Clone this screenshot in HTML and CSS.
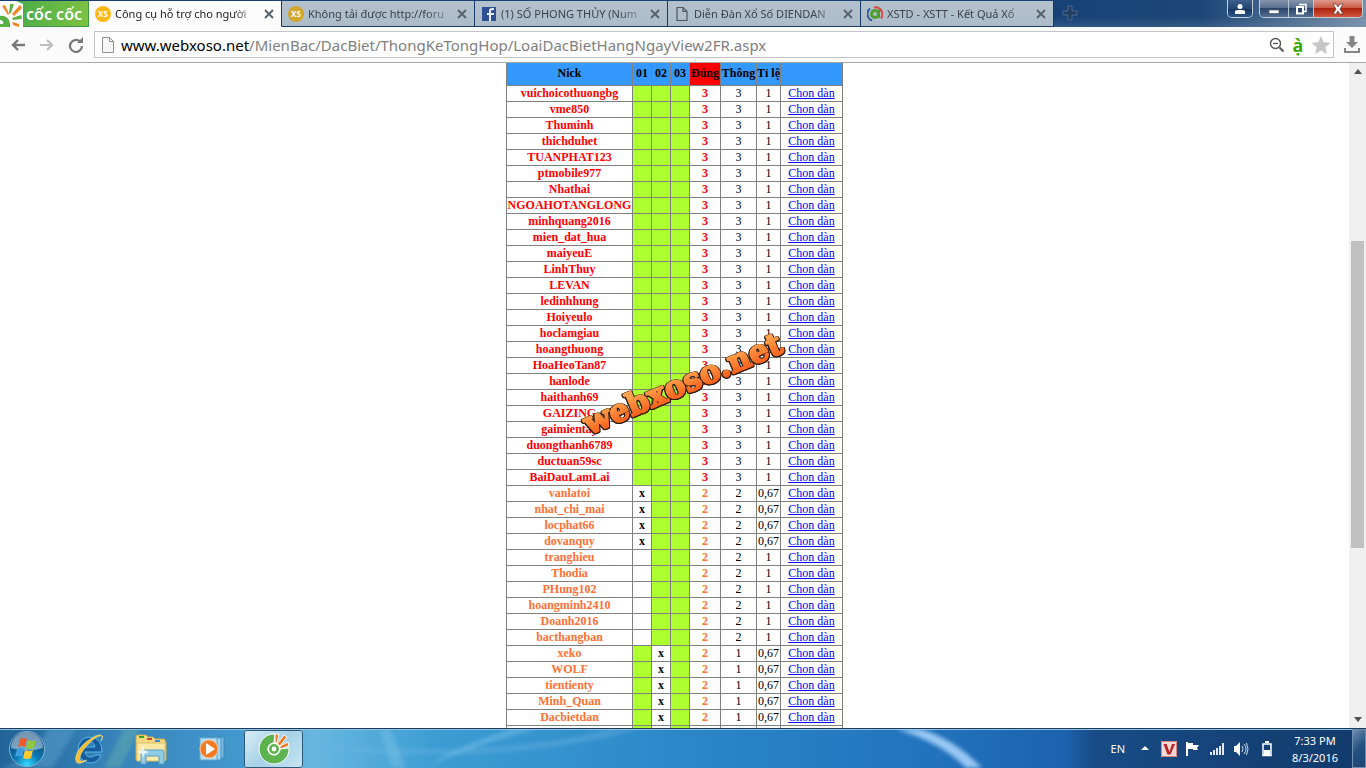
FILE: index.html
```html
<!DOCTYPE html>
<html lang="vi">
<head>
<meta charset="utf-8">
<title>Công cụ hỗ trợ cho người</title>
<link rel="stylesheet" href="styles.css">
</head>
<body>
<header class="titlebar">
  <button class="brand" aria-label="Cốc Cốc">
    <svg width="24" height="26" viewBox="0 0 24 26"><path d="M0 0h16l7 3v23H0z" fill="#fff"/><path d="M2 5l3-1 4 9-1 1z" fill="#f58220"/><path d="M10 3l4 0-3 9-2 1z" fill="#62b346"/><path d="M20 4l2 3-8 8-2-2z" fill="#f58220"/><path d="M12 17l9-3 1 4-9 1z" fill="#62b346"/><path d="M12 21l7 2v3l-6-2z" fill="#f58220"/><path d="M0 15c5-1 9 2 10 7v4H0v-3h3c1-2-1-4-3-4z" fill="#55b046"/></svg>
    <span>cốc cốc</span>
  </button>
  <nav class="tabs">
    <div class="tab active"><svg class="fav" viewBox="0 0 16 16"><circle cx="8" cy="8" r="8" fill="#fdb913"/><text class="xs" x="8" y="11" text-anchor="middle">XS</text></svg><a href="#">Công cụ hỗ trợ cho người</a><button class="close" aria-label="Đóng"><svg viewBox="0 0 10 10"><path d="M1 1l8 8M9 1L1 9"/></svg></button></div>
    <div class="tab"><svg class="fav" viewBox="0 0 16 16"><circle cx="8" cy="8" r="8" fill="#d3a62c"/><text class="xs" x="8" y="11" text-anchor="middle">XS</text></svg><a href="#">Không tải được http://foru</a><button class="close" aria-label="Đóng"><svg viewBox="0 0 10 10"><path d="M1 1l8 8M9 1L1 9"/></svg></button></div>
    <div class="tab"><svg class="fav" viewBox="0 0 16 16"><path d="M1 1h14v14H1z" fill="#2f4f94"/><path d="M8 15V9H6V7h2V5c0-2 1-3 3-3h2v2h-1c-1 0-2 0-2 1v2h3v2h-3v6z" fill="#e6edf5"/></svg><a href="#">(1) SỐ PHONG THỦY (Num</a><button class="close" aria-label="Đóng"><svg viewBox="0 0 10 10"><path d="M1 1l8 8M9 1L1 9"/></svg></button></div>
    <div class="tab"><svg class="fav" viewBox="0 0 16 16"><path d="M3 1.500h6l4 4v9H3zM9 1.500v4h4" fill="none" stroke="#4f565c" stroke-width="1.200"/></svg><a href="#">Diễn Đàn Xổ Số DIENDAN</a><button class="close" aria-label="Đóng"><svg viewBox="0 0 10 10"><path d="M1 1l8 8M9 1L1 9"/></svg></button></div>
    <div class="tab"><svg class="fav" viewBox="0 0 16 16"><circle cx="8" cy="8" r="3.500" fill="none" stroke="#4d9e2e" stroke-width="3"/><path d="M12 4v8" stroke="#4d9e2e" stroke-width="2"/><path d="M3 2.500a7 7 0 0 0 2 12" fill="none" stroke="#3159a0" stroke-width="2"/><path d="M7 1.500a7 7 0 0 1 7 11" fill="none" stroke="#d7483f" stroke-width="2"/></svg><a href="#">XSTD - XSTT - Kết Quả Xổ</a><button class="close" aria-label="Đóng"><svg viewBox="0 0 10 10"><path d="M1 1l8 8M9 1L1 9"/></svg></button></div>
  </nav>
  <button class="newtab" aria-label="Tab mới"><svg width="16" height="16" viewBox="0 0 16 16"><path d="M6 1h4v5h5v4h-5v5H6v-5H1V6h5z" fill="#203d60" stroke="#4a6b92"/></svg></button>
  <div class="winctl user"><button aria-label="Người dùng"><svg width="12" height="12" viewBox="0 0 12 12"><circle cx="6" cy="3.500" r="2.500" fill="#fff"/><path d="M1 11V9q0-2 3-2h4q3 0 3 2v2z" fill="#fff"/></svg></button></div>
  <div class="winctl">
    <button class="min" aria-label="Thu nhỏ"><svg width="12" height="12" viewBox="0 0 12 12"><path d="M1 7h10v3.500H1z" fill="#fff" stroke="#4d5a6c" stroke-width=".7"/></svg></button>
    <button class="restore" aria-label="Khôi phục"><svg width="12" height="12" viewBox="0 0 12 12"><path d="M4 1.500h7v7H9" fill="none" stroke="#fff" stroke-width="1.500"/><path d="M2 4h6v6.500H2z" fill="none" stroke="#fff" stroke-width="2"/><path d="M4 6.500h2v2H4z" fill="#2c3c56"/></svg></button>
    <button class="quit" aria-label="Đóng cửa sổ"><svg width="14" height="12" viewBox="0 0 14 12"><path d="M2 1h3l2 3 2-3h3L9 6l3 5H9L7 8l-2 3H2l3-5z" fill="#fff" stroke="#5b3036" stroke-width=".7"/></svg></button>
  </div>
</header>
<div class="toolbar">
  <button class="nav" aria-label="Quay lại"><svg viewBox="0 0 16 16"><path d="M15 8H3M8 3L3 8l5 5" fill="none" stroke="#77787a" stroke-width="2.400"/></svg></button>
  <button class="nav" aria-label="Tiến"><svg viewBox="0 0 16 16"><path d="M1 8h12M8 3l5 5-5 5" fill="none" stroke="#bdbdbd" stroke-width="2.200"/></svg></button>
  <button class="nav reload" aria-label="Tải lại"><svg viewBox="0 0 16 16"><path d="M12 4.500A6 6 0 1 0 14 9" fill="none" stroke="#77787a" stroke-width="2.200"/><path d="M9 6h6V0z" fill="#77787a"/></svg></button>
  <div class="address">
    <svg width="12" height="16" viewBox="0 0 12 16"><path d="M.5.5h7l4 4v11H.5zM7.500.5v4h4" fill="#f7f7f7" stroke="#8f8f8f"/></svg>
    <div class="url" role="textbox" aria-label="Địa chỉ" contenteditable="true" spellcheck="false"><b>www.webxoso.net</b>/MienBac/DacBiet/ThongKeTongHop/LoaiDacBietHangNgayView2FR.aspx</div>
    <button aria-label="Thu phóng"><svg width="16" height="16" viewBox="0 0 16 16"><circle cx="6.500" cy="6.500" r="5" fill="none" stroke="#555" stroke-width="1.400"/><path d="M4 6.500h5" stroke="#555" stroke-width="1.300"/><path d="M10.500 10.500l4 4" stroke="#555" stroke-width="2"/></svg></button>
    <button class="accent" aria-label="Thêm dấu">ạ̀</button>
    <button aria-label="Đánh dấu trang"><svg width="20" height="20" viewBox="0 0 20 20"><path d="M10 1l2.700 6.200 6.800.6-5.100 4.500 1.500 6.700L10 15.500 4.100 19l1.500-6.700L.5 7.800l6.800-.6z" fill="#c6c6c6"/></svg></button>
  </div>
  <button class="download" aria-label="Tải xuống"><svg width="16" height="17" viewBox="0 0 16 17"><path d="M5.500 0h5v6H14l-6 6-6-6h3.500z" fill="#858585"/><path d="M1 12v4h14v-4" fill="none" stroke="#858585" stroke-width="2"/></svg></button>
</div>
<div class="view">
  <main class="page">
    <table>
      <colgroup><col class="c-nick"><col class="c-day"><col class="c-day"><col class="c-day"><col class="c-hit"><col class="c-run"><col class="c-rate"><col class="c-link"></colgroup>
      <thead><tr><th>Nick</th><th>01</th><th>02</th><th>03</th><th class="hit">Đúng</th><th>Thông</th><th>Tỉ lệ</th><th></th></tr></thead>
      <tbody class="top">
        <tr><td>vuichoicothuongbg<td><td><td><td>3<td>3<td>1<td><a href="#">Chọn dàn</a>
        <tr><td>vme850<td><td><td><td>3<td>3<td>1<td><a href="#">Chọn dàn</a>
        <tr><td>Thuminh<td><td><td><td>3<td>3<td>1<td><a href="#">Chọn dàn</a>
        <tr><td>thichduhet<td><td><td><td>3<td>3<td>1<td><a href="#">Chọn dàn</a>
        <tr><td>TUANPHAT123<td><td><td><td>3<td>3<td>1<td><a href="#">Chọn dàn</a>
        <tr><td>ptmobile977<td><td><td><td>3<td>3<td>1<td><a href="#">Chọn dàn</a>
        <tr><td>Nhathai<td><td><td><td>3<td>3<td>1<td><a href="#">Chọn dàn</a>
        <tr><td>NGOAHOTANGLONG<td><td><td><td>3<td>3<td>1<td><a href="#">Chọn dàn</a>
        <tr><td>minhquang2016<td><td><td><td>3<td>3<td>1<td><a href="#">Chọn dàn</a>
        <tr><td>mien_dat_hua<td><td><td><td>3<td>3<td>1<td><a href="#">Chọn dàn</a>
        <tr><td>maiyeuE<td><td><td><td>3<td>3<td>1<td><a href="#">Chọn dàn</a>
        <tr><td>LinhThuy<td><td><td><td>3<td>3<td>1<td><a href="#">Chọn dàn</a>
        <tr><td>LEVAN<td><td><td><td>3<td>3<td>1<td><a href="#">Chọn dàn</a>
        <tr><td>ledinhhung<td><td><td><td>3<td>3<td>1<td><a href="#">Chọn dàn</a>
        <tr><td>Hoiyeulo<td><td><td><td>3<td>3<td>1<td><a href="#">Chọn dàn</a>
        <tr><td>hoclamgiau<td><td><td><td>3<td>3<td>1<td><a href="#">Chọn dàn</a>
        <tr><td>hoangthuong<td><td><td><td>3<td>3<td>1<td><a href="#">Chọn dàn</a>
        <tr><td>HoaHeoTan87<td><td><td><td>3<td>3<td>1<td><a href="#">Chọn dàn</a>
        <tr><td>hanlode<td><td><td><td>3<td>3<td>1<td><a href="#">Chọn dàn</a>
        <tr><td>haithanh69<td><td><td><td>3<td>3<td>1<td><a href="#">Chọn dàn</a>
        <tr><td>GAIZING<td><td><td><td>3<td>3<td>1<td><a href="#">Chọn dàn</a>
        <tr><td>gaimientay<td><td><td><td>3<td>3<td>1<td><a href="#">Chọn dàn</a>
        <tr><td>duongthanh6789<td><td><td><td>3<td>3<td>1<td><a href="#">Chọn dàn</a>
        <tr><td>ductuan59sc<td><td><td><td>3<td>3<td>1<td><a href="#">Chọn dàn</a>
        <tr><td>BaiDauLamLai<td><td><td><td>3<td>3<td>1<td><a href="#">Chọn dàn</a>
      </tbody>
      <tbody class="miss-first">
        <tr><td>vanlatoi<td>x<td><td><td>2<td>2<td>0,67<td><a href="#">Chọn dàn</a>
        <tr><td>nhat_chi_mai<td>x<td><td><td>2<td>2<td>0,67<td><a href="#">Chọn dàn</a>
        <tr><td>locphat66<td>x<td><td><td>2<td>2<td>0,67<td><a href="#">Chọn dàn</a>
        <tr><td>dovanquy<td>x<td><td><td>2<td>2<td>0,67<td><a href="#">Chọn dàn</a>
        <tr><td>tranghieu<td><td><td><td>2<td>2<td>1<td><a href="#">Chọn dàn</a>
        <tr><td>Thodia<td><td><td><td>2<td>2<td>1<td><a href="#">Chọn dàn</a>
        <tr><td>PHung102<td><td><td><td>2<td>2<td>1<td><a href="#">Chọn dàn</a>
        <tr><td>hoangminh2410<td><td><td><td>2<td>2<td>1<td><a href="#">Chọn dàn</a>
        <tr><td>Doanh2016<td><td><td><td>2<td>2<td>1<td><a href="#">Chọn dàn</a>
        <tr><td>bacthangban<td><td><td><td>2<td>2<td>1<td><a href="#">Chọn dàn</a>
      </tbody>
      <tbody class="miss-second">
        <tr><td>xeko<td><td>x<td><td>2<td>1<td>0,67<td><a href="#">Chọn dàn</a>
        <tr><td>WOLF<td><td>x<td><td>2<td>1<td>0,67<td><a href="#">Chọn dàn</a>
        <tr><td>tientienty<td><td>x<td><td>2<td>1<td>0,67<td><a href="#">Chọn dàn</a>
        <tr><td>Minh_Quan<td><td>x<td><td>2<td>1<td>0,67<td><a href="#">Chọn dàn</a>
        <tr><td>Dacbietdan<td><td>x<td><td>2<td>1<td>0,67<td><a href="#">Chọn dàn</a>
        <tr><td>&nbsp;<td><td><td><td><td><td><td>
      </tbody>
    </table>
    <svg class="watermark" width="240" height="130" viewBox="0 0 240 130" aria-label="webxoso.net">
      <defs><linearGradient id="flame" x1="0" y1="0" x2="0" y2="1"><stop offset=".3" stop-color="#ffa04a"/><stop offset=".8" stop-color="#f9641e"/></linearGradient></defs>
      <text x="120" y="75" text-anchor="middle" transform="rotate(-23 120 65)" fill="url(#flame)" stroke="url(#flame)">webxoso.net</text>
    </svg>
  </main>
  <div class="scrollbar">
    <button aria-label="Cuộn lên"><svg width="8" height="5" viewBox="0 0 8 5"><path d="M0 5l4-5 4 5z"/></svg></button>
    <div class="before"></div><div class="thumb"></div><div class="after"></div>
    <button aria-label="Cuộn xuống"><svg width="8" height="5" viewBox="0 0 8 5"><path d="M0 0l4 5 4-5z"/></svg></button>
  </div>
</div>
<footer class="taskbar">
  <svg class="aurora" viewBox="0 0 1366 40" preserveAspectRatio="none" aria-hidden="true">
    <defs><filter id="soft"><feGaussianBlur stdDeviation="2"/></filter></defs>
    <g filter="url(#soft)"><path d="M48 0h28L52 40H0q32-10 48-40z" fill="#7fc2e8" opacity=".3"/><path d="M124 0h16l-20 40h-16z" fill="#8fd6a0" opacity=".25"/><path d="M380 0h10l16 40h-14z" fill="#9ed7f2" opacity=".25"/><path d="M425 40Q480 12 540 0h-26Q460 16 425 40z" fill="#a7dcf5" opacity=".35"/><path d="M310 18Q500 40 640 0h-30Q500 30 310 18z" fill="#8fcaf0" opacity=".25"/><path d="M896 0q46 14 70 40h16Q954 10 920 0z" fill="#a5d1fb" opacity=".9"/></g>
  </svg>
  <nav class="apps">
    <button class="start" aria-label="Start"><svg width="38" height="38" viewBox="0 0 38 38"><defs><radialGradient id="orb" cx=".5" cy=".95" r=".9"><stop offset="0" stop-color="#35dcff"/><stop offset=".4" stop-color="#0c78b4"/><stop offset="1" stop-color="#10406d"/></radialGradient></defs><circle cx="19" cy="19" r="17.500" fill="url(#orb)" stroke="#7fb6d8"/><path d="M3 18a16 16 0 0 1 32 0Q19 23 3 18z" fill="#dcebf5" opacity=".5"/><path d="M12 9q4-2 7 0l-2 8q-4-2-7 0z" fill="#ef5b2b"/><path d="M20 10q4 2 8 0l-2 8q-4 2-8 0z" fill="#8fc73e"/><path d="M9 19q4-2 7 0l-2 8q-4-2-7 0z" fill="#3d9fe0"/><path d="M17 20q4 2 8 0l-2 8q-4 2-8 0z" fill="#ffc931"/></svg></button>
    <button class="app" aria-label="Internet Explorer"><svg width="32" height="32" viewBox="0 0 32 32"><path d="M29 19H12q1 5 6 5 3 0 4-2h6q-3 8-11 8Q5 28 5 17 6 4 17 4q12 1 12 15zM12 14h10q-1-5-5-5t-5 5z" fill="#175d9e" stroke="#58b7ec"/><path d="M28 8c4-7-2-8-9-3C8 11 1 22 3 28c1 4 7 2 11-1-8 3-9 0-5-8C14 11 25 1 29 3c1 0 1 2-1 5z" fill="#f3bd32" stroke="#fff0a0" stroke-width=".5"/></svg></button>
    <button class="app" aria-label="Explorer"><svg width="34" height="32" viewBox="0 0 34 32"><path d="M2 4q0-2 2-2h8l2 2h5l2 2h9l2 3v18H2z" fill="#f2d982" stroke="#d0a948"/><path d="M5 3h5v2H5z" fill="#27a527"/><path d="M13 5h5v2h-5z" fill="#c74938"/><path d="M21 7h5v2h-5z" fill="#2f8cde"/><path d="M3 10h28v18H3z" fill="#fae9a5" stroke="#e0bd62"/><path d="M7 31V19q0-2 2-2h19q2 0 2 2v12h-5v-8H12v8z" fill="#90cbe8" stroke="#5b9fbf"/><path d="M9 12l1 5 5 2-5 2-1 5-1-5-5-2 5-2z" fill="#fff" opacity=".8"/></svg></button>
    <button class="app" aria-label="Media Player"><svg width="30" height="28" viewBox="0 0 30 28"><path d="M10 2h16v21H10z" fill="#75bce6" stroke="#3c86b8"/><path d="M6 3h17v22H6z" fill="#9ed2f0" stroke="#4b93c4"/><path d="M2 3h17v22H2z" fill="#b6e0f6" stroke="#64a8d2"/><circle cx="11" cy="14" r="9" fill="#f27a22" stroke="#ffc18c"/><path d="M8 8l9 6-9 6z" fill="#fff"/></svg></button>
    <button class="app current" aria-label="Cốc Cốc"><svg width="32" height="32" viewBox="0 0 32 32"><path d="M17 1a15 15 0 1 0 14 14l-9 1A6 6 0 1 1 16 10z" fill="#5cb350" stroke="#fff"/><circle cx="16" cy="16" r="6.500" fill="#fff"/><circle cx="16" cy="16" r="3.700" fill="none" stroke="#5cb350" stroke-width="2.600"/><path d="M17 1l4 0-2 9h-2z" fill="#f37a25" stroke="#fff"/><path d="M26 2l3 2-7 9-3-2z" fill="#f37a25" stroke="#fff"/><path d="M30 9l1 4-9 3v-3z" fill="#f37a25" stroke="#fff"/></svg></button>
  </nav>
  <div class="tray">
    <span class="lang">EN</span>
    <svg width="8" height="5" viewBox="0 0 8 5"><path d="M0 4l4-4 4 4z" fill="#fff"/></svg>
    <svg width="16" height="16" viewBox="0 0 16 16"><path d="M0 0h16v16H0z" fill="#f5d9d7"/><path d="M.5.5h15v15H.5z" fill="none" stroke="#d98985"/><path d="M2.500 3h3l3 8 2.500-8h3L9.500 13.500h-3z" fill="#b92025"/></svg>
    <svg width="16" height="16" viewBox="0 0 16 16"><path d="M2 1v14" stroke="#fff" stroke-width="2"/><path d="M3 2h5v2h6l-2 3 1 2H8V8H3z" fill="#fff"/></svg>
    <svg width="16" height="16" viewBox="0 0 16 16"><path d="M1 11h2v3H1zM4 9h2v5H4zM7 7h2v7H7zM10 5h2v9h-2zM13 2h2v12h-2z" fill="#dfe7f0"/></svg>
    <svg width="16" height="16" viewBox="0 0 16 16"><path d="M1 5h2l4-4v14l-4-4H1z" fill="#fff"/><path d="M9 5q2 3 0 6M11 3q4 5 0 10M13.500 2q3 6 0 12" fill="none" stroke="#cfdbe8"/></svg>
    <svg class="battery" width="10" height="16" viewBox="0 0 10 16"><path d="M3 0h4v2H3z" fill="#fff"/><path d="M1 3h8v11.500H1z" fill="none" stroke="#fff" stroke-width="1.500"/><path d="M2 9h6v5H2z" fill="#fff"/></svg>
    <div class="clock"><time>7:33 PM</time><time>8/3/2016</time></div>
    <button class="desktop" aria-label="Hiện màn hình nền"></button>
  </div>
</footer>
</body>
</html>
```
FILE: styles.css
```css
* { box-sizing: border-box; }

body {
  margin: 0;
  height: 100vh;
  display: flex;
  flex-direction: column;
  overflow: hidden;
  background: #fff;
  font-family: "Noto Sans", "Open Sans", sans-serif;
  font-size: 11px;
}

button {
  border: 0;
  padding: 0;
  background: none;
  font: inherit;
  display: flex;
  align-items: center;
  justify-content: center;
}

svg { flex: none; }

/* Title bar */
.titlebar {
  height: 27px;
  flex: none;
  display: flex;
  align-items: flex-start;
  padding: 1px 3px 0 0;
  background: linear-gradient(#0000 60%, #8fa3b733), linear-gradient(90deg, #173f72 0, #174276 78%, #1c4777 88%, #496a90 94%, #7890aa 100%);
}

.brand {
  width: 89px;
  height: 26px;
  justify-content: flex-start;
  gap: 2px;
  background: linear-gradient(100deg, #3ea74b, #7fc241);
  border: solid #3a9a45;
  border-width: 0 1px 1px 0;
  color: #fff;
  font: 600 16px/24px "Noto Sans", sans-serif;
}

.tabs { display: flex; }

.tab {
  width: 193px;
  height: 26px;
  display: flex;
  align-items: center;
  padding: 0 7px 0 6px;
  background: linear-gradient(#b3c1cd, #acbcc9);
  border: solid #173b66;
  border-width: 0 1px 1px 0;
  color: #3a4249;
}

.tab.active {
  background: #fcfcfc;
  border-bottom-color: #fcfcfc;
  color: #222;
}

.fav {
  width: 16px;
  height: 16px;
  margin-right: 4px;
}

.xs {
  font: 700 8px "Noto Sans", sans-serif;
  fill: #fff;
}

.tab a {
  flex: 1;
  white-space: nowrap;
  color: inherit;
  text-decoration: none;
  mask-image: linear-gradient(90deg, #000 84%, #0004);
}

.close { margin-left: 9px; }

.close svg {
  width: 10px;
  height: 10px;
  stroke: #59636c;
  stroke-width: 2;
}

.newtab {
  margin: 4px auto 0 8px;
}

.winctl {
  display: flex;
  height: 18px;
  margin-top: -1px;
  border: 1px solid #c3ced9;
  border-top: 0;
  border-radius: 0 0 5px 5px;
  overflow: hidden;
}

.winctl.user { margin-right: 6px; }

.winctl button {
  width: 26px;
  background: linear-gradient(#8394ab, #5b7190 45%, #2b4469 50%, #546f91);
}

.winctl.user button {
  width: 24px;
  background: linear-gradient(#3c5f8b, #234774 50%, #163762 55%, #305888);
}

.winctl .min { width: 28px; }

.winctl .restore {
  border: solid #b9c5d2;
  border-width: 0 1px;
}

.winctl .quit {
  width: 48px;
  background: linear-gradient(#dd998c, #cb5c48 45%, #ac2412 50%, #d2553a);
}

/* Toolbar */
.toolbar {
  height: 36px;
  flex: none;
  display: flex;
  align-items: center;
  padding: 0 6px 0 10px;
  background: #fbfbfb;
  border-bottom: 1px solid #a8a8a8;
}

.nav {
  width: 16px;
  margin-right: 13px;
}

.nav.reload { margin-right: 10px; }

.nav svg {
  width: 16px;
  height: 16px;
}

.address {
  flex: 1;
  height: 27px;
  margin-right: 10px;
  padding: 0 2px 0 7px;
  display: flex;
  align-items: center;
  gap: 7px;
  background: #fff;
  border: 1px solid #c4c4c4;
}

.url {
  flex: 1;
  overflow: hidden;
  white-space: nowrap;
  outline: 0;
  font: 15px/24px "Noto Sans", "Open Sans", sans-serif;
  color: #808080;
}

.url b {
  font-weight: 400;
  color: #000;
}

.accent {
  width: 12px;
  color: #3fa800;
  font: 700 18px/24px "Noto Sans", sans-serif;
}

/* Page area */
.view {
  flex: 1;
  min-height: 0;
  display: flex;
}

.page {
  flex: 1;
  position: relative;
  overflow: hidden;
}

table {
  width: 337px;
  margin: 0 auto;
  table-layout: fixed;
  border-collapse: collapse;
  font: 12px/15px "Liberation Serif", "Times New Roman", serif;
  text-align: center;
  white-space: nowrap;
}

.c-nick { width: 126px; }
.c-day { width: 19px; }
.c-hit { width: 31px; }
.c-run { width: 36px; }
.c-rate { width: 24px; }
.c-link { width: 62px; }

th, td {
  padding: 0;
  border: 1px solid #808080;
}

th {
  height: 22px;
  padding-bottom: 1px;
  border-top: 0;
  background: #3399ff;
}

th.hit { background: #f00; }

td:nth-child(-n+5) { font-weight: 700; }

td:first-child, td:nth-child(5) { color: #ff7034; }

.top td:first-child, .top td:nth-child(5) { color: #f00; }

td:nth-child(n+2):nth-child(-n+4) { background: #adff2f; }

.miss-first td:nth-child(2), .miss-second td:nth-child(3) { background: #fff; }

td a {
  color: #00e;
  text-decoration-skip-ink: none;
}

.watermark {
  position: absolute;
  left: calc(50% - 112px);
  top: 256px;
  pointer-events: none;
  filter: drop-shadow(1px 0 #2a1a10) drop-shadow(-1px 0 #2a1a10) drop-shadow(0 1px #2a1a10);
}

.watermark text {
  font: 700 31px "DejaVu Serif", serif;
  stroke-width: 2;
  stroke-linejoin: round;
}

.scrollbar {
  width: 17px;
  padding: 0 2px;
  display: flex;
  flex-direction: column;
  background: #f0f0f0;
}

.scrollbar button {
  height: 17px;
  fill: #505050;
}

.before { flex: 161; }
.thumb { flex: 307; background: #c1c1c1; }
.after { flex: 163; }

/* Taskbar */
.taskbar {
  position: relative;
  height: 40px;
  flex: none;
  display: flex;
  justify-content: space-between;
  border-top: 1px solid #1d3b58;
  box-shadow: inset 0 1px #8fc4e8;
  background: linear-gradient(90deg, #226498 0, #3580b6 7%, #4399cf 18%, #68b7e0 23%, #3c9dd3 32%, #2c87c8 50%, #2273bd 68%, #1b62af 78%, #184c86 80%, #123a6b 100%);
}

.aurora {
  position: absolute;
  inset: 0;
  width: 100%;
  height: 100%;
}

.apps, .tray {
  position: relative;
  display: flex;
  align-items: center;
}

.start {
  width: 38px;
  margin: 0 12px 0 8px;
}

.app {
  width: 62px;
  height: 38px;
}

.app.current {
  width: 59px;
  border: 1px solid #e8f6fd;
  outline: 1px solid #2d5878;
  outline-offset: -1px;
  border-radius: 3px;
  background: linear-gradient(135deg, #d9edf7, #a5d1e7 50%, #c7e5f2);
}

.tray {
  gap: 8px;
  color: #fff;
}

.tray .lang { margin-right: 8px; }
.tray .battery { margin: 0 10px 0 5px; }
.tray svg:nth-of-type(1) { margin-right: 4px; }

.clock {
  width: 50px;
  margin-right: 4px;
  display: flex;
  flex-direction: column;
  align-items: center;
  line-height: 17px;
}

.desktop {
  width: 14px;
  height: 39px;
  border: 1px solid #6f90b2;
  background: linear-gradient(135deg, #6e8fb0, #24507f 50%, #1c4473);
}
```
